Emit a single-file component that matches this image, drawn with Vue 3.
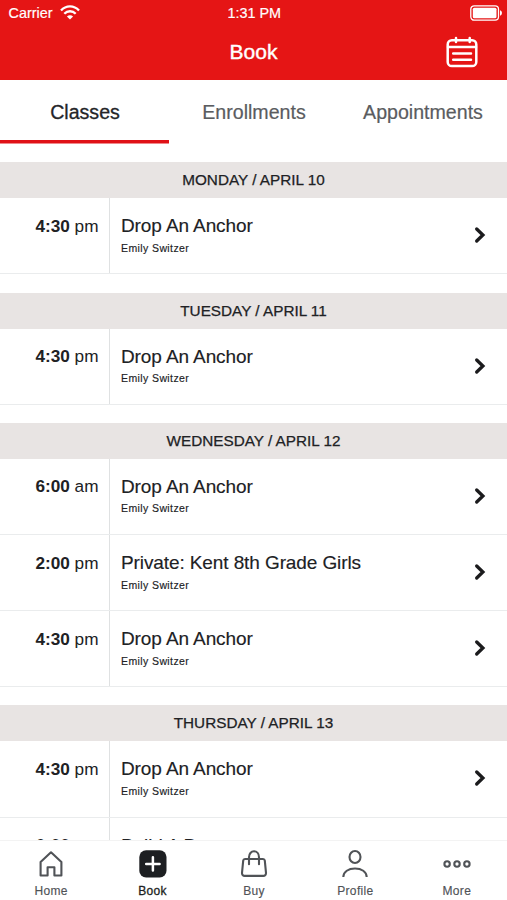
<script setup>
const tabs = ['Classes', 'Enrollments', 'Appointments']
const anchor = (hour, half) => ({ hour, half, title: 'Drop An Anchor', coach: 'Emily Switzer' })
const days = [
  { label: 'MONDAY / APRIL 10', classes: [anchor('4:30', 'pm')] },
  { label: 'TUESDAY / APRIL 11', classes: [anchor('4:30', 'pm')] },
  {
    label: 'WEDNESDAY / APRIL 12',
    classes: [
      anchor('6:00', 'am'),
      { hour: '2:00', half: 'pm', title: 'Private: Kent 8th Grade Girls', coach: 'Emily Switzer' },
      anchor('4:30', 'pm'),
    ],
  },
  {
    label: 'THURSDAY / APRIL 13',
    classes: [
      anchor('4:30', 'pm'),
      { hour: '6:00', half: 'pm', title: 'Build A Boat', coach: 'Emily Switzer' },
    ],
  },
]
const nav = ['Home', 'Book', 'Buy', 'Profile', 'More']
</script>

<template>
  <div class="screen">
    <header class="top">
      <div class="status">
        <div class="carrier">
          <span>Carrier</span>
          <svg width="20" height="15" viewBox="0 0 20 15" fill="none" stroke="#fff" stroke-width="2.3">
            <path d="M1 5.4C6-.1 14-.1 19 5.4" />
            <path d="M4.3 8.8C7.5 5.4 12.5 5.4 15.7 8.8" />
            <path d="M10 14.6 6.9 11.5C8.6 9.9 11.4 9.9 13.1 11.5Z" fill="#fff" stroke="none" />
          </svg>
        </div>
        <span class="clock">1:31 PM</span>
        <svg class="battery" width="33" height="16" viewBox="0 0 33 16">
          <rect x=".8" y=".8" width="27.7" height="14.4" rx="3.4" fill="none" stroke="#fff" stroke-width="1.3" />
          <rect x="2.8" y="2.8" width="23.7" height="10.4" rx="1.5" fill="#fff" />
          <path d="M30 5.3c2.6.6 2.6 4.8 0 5.4z" fill="#fff" />
        </svg>
      </div>
      <div class="titlebar">
        <span></span>
        <h1>Book</h1>
        <svg class="calendar" width="32" height="32" viewBox="0 0 32 32" fill="none" stroke="#fff" stroke-width="2.5" stroke-linecap="round">
          <rect x="1.7" y="4.2" width="28.6" height="25.9" rx="4.2" />
          <path d="M2 11h28M10 2v4M23.7 2v4M7.2 17.4h17.8M7.2 23.7h17.8" />
        </svg>
      </div>
    </header>

    <nav class="tabs">
      <div v-for="(tab, i) in tabs" :key="tab" class="tab" :class="{ active: i === 0 }">{{ tab }}</div>
    </nav>

    <main class="list">
      <section v-for="day in days" :key="day.label" class="day">
        <h2>{{ day.label }}</h2>
        <div v-for="(item, i) in day.classes" :key="i" class="row">
          <div class="time"><b>{{ item.hour }}</b> {{ item.half }}</div>
          <div class="info">
            <div class="title">{{ item.title }}</div>
            <div class="coach">{{ item.coach }}</div>
          </div>
          <svg class="chevron" width="12" height="18" viewBox="0 0 12 18" fill="none" stroke="#1b1b1d" stroke-width="3.3" stroke-linecap="round">
            <path d="M2.7 3 8.9 9l-6.2 6" />
          </svg>
        </div>
      </section>
    </main>

    <footer class="bottom">
      <div v-for="name in nav" :key="name" class="item" :class="{ current: name === 'Book' }">
        <svg width="30" height="30" viewBox="0 0 30 30" fill="none" stroke="#505357" stroke-width="2.1">
          <path v-if="name === 'Home'" d="M15 3.3 25.4 13v13.5h-7v-8.3h-6.8v8.3h-7V13Z" stroke-linejoin="round" />
          <template v-else-if="name === 'Book'">
            <rect x="1.3" y="1.3" width="27.2" height="27.2" rx="6.8" fill="#1d1f22" stroke="none" />
            <path d="M14.9 8.2v13.4M8.2 14.9h13.4" stroke="#fff" stroke-width="2.5" stroke-linecap="round" />
          </template>
          <template v-else-if="name === 'Buy'">
            <path d="M6 10h18c1 0 1.7.6 1.8 1.6l1.2 12.2c.1 1.8-.9 3.1-2.7 3.1H5.7c-1.8 0-2.8-1.3-2.7-3.1l1.2-12.2C4.300 10.600 5 10 6 10Z" />
            <path d="M10 15.300V8.200c0-3.500 2.200-5.900 5-5.900s5 2.400 5 5.900v7.100" stroke-linecap="round" />
          </template>
          <template v-else-if="name === 'Profile'">
            <ellipse cx="15" cy="8" rx="5.500" ry="6" />
            <path d="M3.300 28c.200-5.300 5.100-8.500 11.700-8.500S26.500 22.700 26.700 28" />
          </template>
          <template v-else>
            <circle cx="5.100" cy="15" r="2.700" />
            <circle cx="15" cy="15" r="2.700" />
            <circle cx="24.900" cy="15" r="2.700" />
          </template>
        </svg>
        <span>{{ name }}</span>
      </div>
    </footer>
  </div>
</template>

<style>
body {
  margin: 0;
}
</style>

<style scoped>
.screen {
  width: 507px;
  height: 900px;
  display: flex;
  flex-direction: column;
  overflow: hidden;
  background: #fff;
  color: #202124;
  font-family: "Liberation Sans", Arial, sans-serif;
}
svg {
  display: block;
  flex: none;
}
.top {
  flex: none;
  height: 80.4px;
  background: #e51515;
  color: #fff;
}
.status {
  display: grid;
  grid-template-columns: 1fr auto 1fr;
  align-items: center;
  height: 25px;
  padding: 0 4px 0 8.5px;
  font-size: 14.4px;
  -webkit-text-stroke: 0.2px #fff;
}
.carrier {
  display: flex;
  align-items: center;
  gap: 8px;
}
.clock {
  margin-left: -3px;
}
.battery {
  justify-self: end;
}
.titlebar {
  display: grid;
  grid-template-columns: 1fr auto 1fr;
  align-items: center;
  height: 54px;
  padding: 0 29px;
}
h1 {
  margin: 0;
  font-size: 21px;
  font-weight: 400;
  -webkit-text-stroke: 0.4px #fff;
}
.calendar {
  justify-self: end;
}
.tabs {
  flex: none;
  display: grid;
  grid-template-columns: repeat(3, 1fr);
  height: 63.4px;
}
.tab {
  box-sizing: border-box;
  padding: 20px 0 0 1px;
  line-height: 24px;
  font-size: 19.6px;
  text-align: center;
  color: #5a5c60;
  -webkit-text-stroke: 0.2px #5a5c60;
}
.tab.active {
  color: #242528;
  background: linear-gradient(#e01117, #e01117) bottom / 100% 3.5px no-repeat;
  -webkit-text-stroke: 0.3px #242528;
}
.list {
  flex: 1;
  min-height: 0;
  overflow: hidden;
  padding-top: 18.4px;
}
.day {
  margin-bottom: 18.3px;
}
h2 {
  margin: 0;
  height: 36px;
  line-height: 36px;
  background: #e8e4e3;
  font-size: 15.3px;
  font-weight: 400;
  text-align: center;
  -webkit-text-stroke: 0.25px #202124;
}
.row {
  box-sizing: border-box;
  display: flex;
  height: 76.08px;
  border-bottom: 1px solid #eaeced;
}
.time {
  box-sizing: border-box;
  width: 110px;
  padding: 17.5px 10.5px 0 0;
  border-right: 1px solid #dfe1e2;
  text-align: right;
  font-size: 17.2px;
  line-height: 20px;
  white-space: nowrap;
}
.info {
  flex: 1;
  padding: 17px 0 0 11px;
}
.title {
  font-size: 19px;
  line-height: 22px;
  letter-spacing: -0.1px;
  -webkit-text-stroke: 0.15px #202124;
}
.coach {
  margin-top: 3.5px;
  font-size: 10.5px;
  line-height: 14px;
  letter-spacing: 0.4px;
  -webkit-text-stroke: 0.15px #202124;
}
.chevron {
  align-self: center;
  margin: 0 21px 1px 0;
}
.bottom {
  flex: none;
  display: grid;
  grid-template-columns: repeat(5, 1fr);
  height: 59px;
  border-top: 1px solid #f3f3f3;
  background: #fff;
}
.item {
  display: flex;
  flex-direction: column;
  align-items: center;
  padding: 7.5px 0 0 1px;
  font-size: 12px;
  line-height: 16px;
  letter-spacing: 0.35px;
  color: #505357;
  -webkit-text-stroke: 0.15px #505357;
}
.item span {
  margin-top: 4px;
}
.current {
  color: #1d1f22;
  -webkit-text-stroke: 0.3px #1d1f22;
}
</style>
